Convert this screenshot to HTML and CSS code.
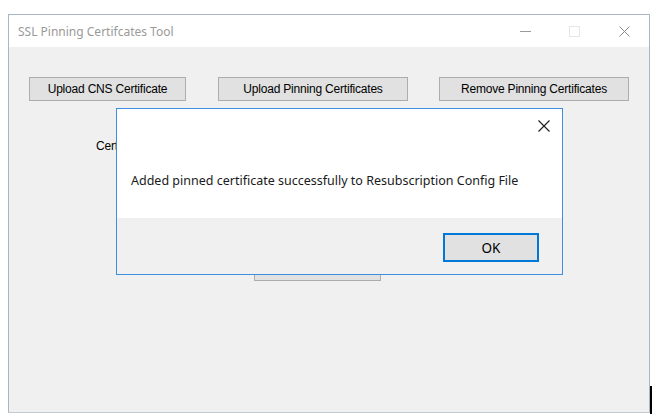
FILE: index.html
```html
<!DOCTYPE html>
<html lang="en">

<head>
    <meta charset="UTF-8">
    <title>SSL Pinning Certifcates Tool</title>
    <link rel="stylesheet" href="styles.css">
</head>

<body>
    <div class="window">
        <div class="titlebar">
            <span class="title">SSL Pinning Certifcates Tool</span>
            <div class="controls">
                <span class="ctl ctl-min"></span>
                <span class="ctl ctl-max"></span>
                <svg class="ctl ctl-close" width="11" height="11" viewBox="0 0 11 11">
                    <path d="M0.5 0.5 L10.5 10.5 M10.5 0.5 L0.5 10.5" stroke="#8a8a8a" stroke-width="1" fill="none" />
                </svg>
            </div>
        </div>
        <div class="content">
            <div class="button-row">
                <button type="button" class="win-btn btn-cns">Upload CNS Certificate</button>
                <button type="button" class="win-btn btn-wide">Upload Pinning Certificates</button>
                <button type="button" class="win-btn btn-wide btn-last">Remove Pinning Certificates</button>
            </div>
            <div class="cert-row">
                <span class="cert-label">Certificate</span>
            </div>
            <div class="hidden-row">
                <button type="button" class="win-btn btn-hidden">Generate</button>
            </div>
        </div>

        <!-- message box over the main window -->
        <div class="msgbox">
            <div class="msg-body">
                <svg class="msg-close" width="12" height="12" viewBox="0 0 12 12">
                    <path d="M0.5 0.5 L11.5 11.5 M11.5 0.5 L0.5 11.5" stroke="#222" stroke-width="1.2" fill="none" />
                </svg>
                <p class="msg-text">Added pinned certificate successfully to Resubscription Config File</p>
            </div>
            <div class="msg-footer">
                <button type="button" class="win-btn btn-ok">OK</button>
            </div>
        </div>
    </div>
    <span class="cursor-line"></span>
</body>

</html>
```

FILE: styles.css
```css
/* 全局样式 */
body {
    margin: 0;
    padding: 0;
    background-color: #fff;
    font-family: 'Liberation Sans', Arial, sans-serif;
    color: #000;
}

/* 窗口 */
.window {
    position: relative;
    box-sizing: border-box;
    width: 642px;
    height: 399px;
    margin: 14px 0 0 8px;
    border: 1px solid #a9b6c4;
    border-bottom-color: #c3cad2;
    display: flex;
    flex-direction: column;
}

.titlebar {
    height: 32px;
    background-color: #fff;
    display: flex;
    align-items: center;
    padding: 0 0 0 9px;
}

.title {
    font-family: 'Noto Sans', sans-serif;
    font-size: 12px;
    color: #9a9a9a;
    padding-top: 1px;
}

.controls {
    margin-left: auto;
    display: flex;
    align-items: center;
}

.ctl {
    display: block;
}

.ctl-min {
    width: 11px;
    height: 1px;
    background-color: #9a9a9a;
    margin-right: 38px;
}

.ctl-max {
    box-sizing: border-box;
    width: 11px;
    height: 11px;
    border: 1px solid #e6e6e6;
    margin-right: 39px;
}

.ctl-close {
    margin-right: 19px;
}

.content {
    flex: 1;
    background-color: #f0f0f0;
    padding: 30px 0 0 20px;
}

/* 按钮 */
.win-btn {
    box-sizing: border-box;
    height: 24px;
    padding: 0;
    background-color: #e1e1e1;
    border: 1px solid #adadad;
    border-radius: 0;
    font-family: 'Liberation Sans', Arial, sans-serif;
    font-size: 12px;
    letter-spacing: -0.2px;
    color: #000;
}

.button-row {
    display: flex;
}

.btn-cns {
    width: 157px;
}

.btn-wide {
    width: 190px;
    margin-left: 32px;
}

.btn-last {
    margin-left: 31px;
}

.cert-row {
    padding: 35px 0 0 67px;
    height: 20px;
}

.cert-label {
    font-size: 12px;
    letter-spacing: -0.2px;
}

.hidden-row {
    padding: 101px 0 0 225px;
}

.btn-hidden {
    width: 127px;
    color: transparent;
}

/* 消息框 */
.msgbox {
    position: absolute;
    left: 107px;
    top: 93px;
    box-sizing: border-box;
    width: 447px;
    height: 167px;
    border: 1px solid #3d8ee0;
    background-color: #f0f0f0;
    display: flex;
    flex-direction: column;
}

.msg-body {
    position: relative;
    height: 109px;
    background-color: #fff;
}

.msg-close {
    position: absolute;
    right: 12px;
    top: 11px;
}

.msg-text {
    margin: 0;
    padding: 63px 0 0 14px;
    font-family: 'Noto Sans', sans-serif;
    font-size: 12.5px;
    color: #1a1a1a;
}

.msg-footer {
    display: flex;
    justify-content: flex-end;
    padding: 15px 23px 0 0;
}

.btn-ok {
    width: 96px;
    height: 29px;
    border: 2px solid #0078d7;
    font-family: 'Noto Sans', sans-serif;
    font-size: 13.5px;
    letter-spacing: 0;
}

.cursor-line {
    position: absolute;
    left: 650px;
    top: 386px;
    width: 2px;
    height: 28px;
    background-color: #000;
}
```
